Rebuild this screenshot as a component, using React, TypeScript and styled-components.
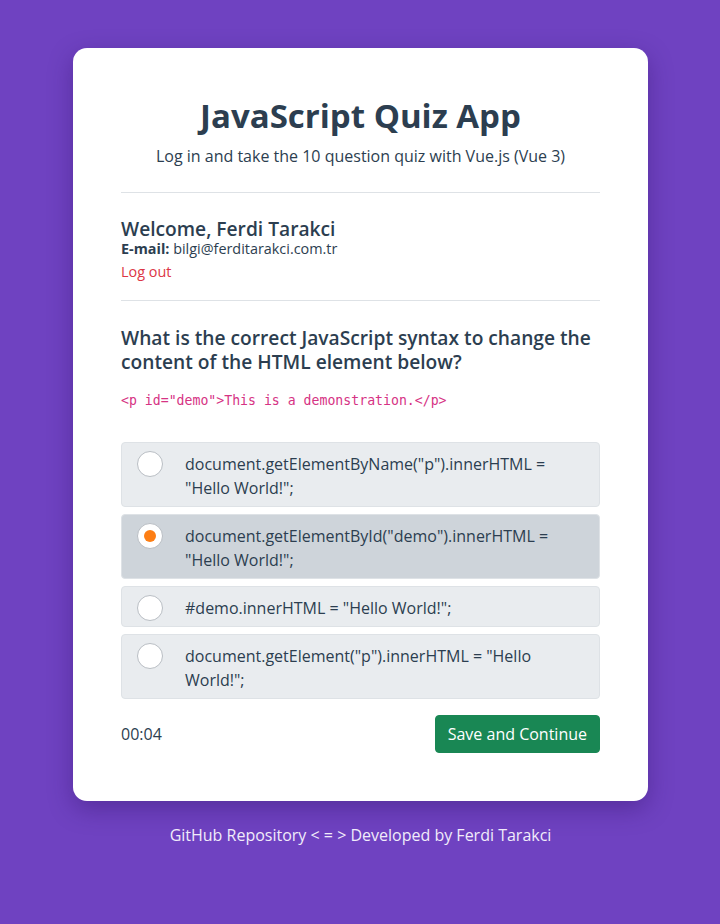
import styled, { createGlobalStyle } from "styled-components";
import { useState } from "react";

const GlobalStyle = createGlobalStyle`
  html, body {
    margin: 0;
    padding: 0;
    background: #6f42c1;
    font-family: "Open Sans", "Noto Sans", sans-serif;
    color: #2c3e50;
  }
  * { box-sizing: border-box; }
`;

const options = [
  'document.getElementByName("p").innerHTML = "Hello World!";',
  'document.getElementById("demo").innerHTML = "Hello World!";',
  '#demo.innerHTML = "Hello World!";',
  'document.getElement("p").innerHTML = "Hello World!";',
];

export default function App() {
  const [selected, setSelected] = useState(1);

  return (
    <Page>
      <GlobalStyle />
      <Card>
        <Header>
          <Title>JavaScript Quiz App</Title>
          <Lead>Log in and take the 10 question quiz with Vue.js (Vue 3)</Lead>
        </Header>
        <Divider />
        <User>
          <Welcome>Welcome, Ferdi Tarakci</Welcome>
          <Email>
            <strong>E-mail:</strong> bilgi@ferditarakci.com.tr
          </Email>
          <LogOut href="#">Log out</LogOut>
        </User>
        <Divider />
        <Question>
          What is the correct JavaScript syntax to change the content of the
          HTML element below?
        </Question>
        <Code>{'<p id="demo">This is a demonstration.</p>'}</Code>
        <Options>
          {options.map((text, i) => (
            <Option
              key={i}
              $active={selected === i}
              onClick={() => setSelected(i)}
            >
              <Radio $checked={selected === i} />
              <OptionText>{text}</OptionText>
            </Option>
          ))}
        </Options>
        <Footer>
          <Timer>00:04</Timer>
          <SaveButton>Save and Continue</SaveButton>
        </Footer>
      </Card>
      <Credits>
        <a href="#">GitHub Repository</a> &lt; = &gt;{" "}
        <a href="#">Developed by Ferdi Tarakci</a>
      </Credits>
    </Page>
  );
}

const Page = styled.div`
  min-height: 924px;
  padding: 48px 72px 40px 73px;
  display: flex;
  flex-direction: column;
  align-items: center;
`;

const Card = styled.div`
  width: 575px;
  background: #fff;
  border-radius: 14px;
  padding: 48px;
  box-shadow: 0 8px 24px rgba(40, 10, 90, 0.35);
`;

const Header = styled.div`
  text-align: center;
  margin-bottom: 24px;
`;

const Title = styled.h1`
  margin: 0;
  font-size: 33px;
  font-weight: 700;
  line-height: 1.2;
  color: #2c3e50;
`;

const Lead = styled.p`
  margin: 8px 0 0;
  font-size: 16px;
  line-height: 24px;
`;

const Divider = styled.hr`
  border: 0;
  border-top: 1px solid #dee2e6;
  margin: 0;
`;

const User = styled.div`
  padding: 24px 0 18px;
`;

const Welcome = styled.h2`
  margin: 0;
  font-size: 19.2px;
  font-weight: 600;
  line-height: 23px;
`;

const Email = styled.div`
  font-size: 14.4px;
  line-height: 17px;
  strong {
    font-weight: 700;
  }
`;

const LogOut = styled.a`
  display: inline-block;
  margin-top: 5px;
  font-size: 14.4px;
  line-height: 20px;
  color: #dc3545;
  text-decoration: none;
`;

const Question = styled.h3`
  margin: 25px 0 0;
  font-size: 19.2px;
  font-weight: 600;
  line-height: 24px;
`;

const Code = styled.code`
  display: block;
  margin-top: 17px;
  font-family: "DejaVu Sans Mono", "Liberation Mono", monospace;
  font-size: 13.2px;
  line-height: 20px;
  color: #d63384;
`;

const Options = styled.div`
  display: flex;
  flex-direction: column;
  gap: 7px;
  margin-top: 31px;
`;

const Option = styled.label<{ $active: boolean }>`
  display: flex;
  align-items: flex-start;
  gap: 22px;
  padding: 8px 16px 5px 15px;
  background: ${({ $active }) => ($active ? "#ced4da" : "#e9ecef")};
  border: 1px solid #dee2e6;
  border-radius: 4px;
  cursor: pointer;
`;

const Radio = styled.span<{ $checked: boolean }>`
  flex: none;
  width: 26px;
  height: 26px;
  border-radius: 50%;
  background: #fff;
  border: 1px solid #b9bec4;
  display: flex;
  align-items: center;
  justify-content: center;

  &::after {
    content: "";
    display: ${({ $checked }) => ($checked ? "block" : "none")};
    width: 12px;
    height: 12px;
    border-radius: 50%;
    background: #fd7e14;
  }
`;

const OptionText = styled.span`
  font-size: 16px;
  line-height: 24px;
  padding: 1px 0;
`;

const Footer = styled.div`
  display: flex;
  justify-content: space-between;
  align-items: center;
  margin-top: 16px;
`;

const Timer = styled.span`
  font-size: 16px;
`;

const SaveButton = styled.button`
  font-family: inherit;
  font-size: 16px;
  line-height: 24px;
  padding: 6px 12px;
  color: #fff;
  background: #198754;
  border: 1px solid #198754;
  border-radius: 4px;
  cursor: pointer;
`;

const Credits = styled.div`
  margin-top: 22px;
  font-size: 16px;
  line-height: 24px;
  color: #f1ecfa;

  a {
    color: inherit;
    text-decoration: none;
  }
`;
